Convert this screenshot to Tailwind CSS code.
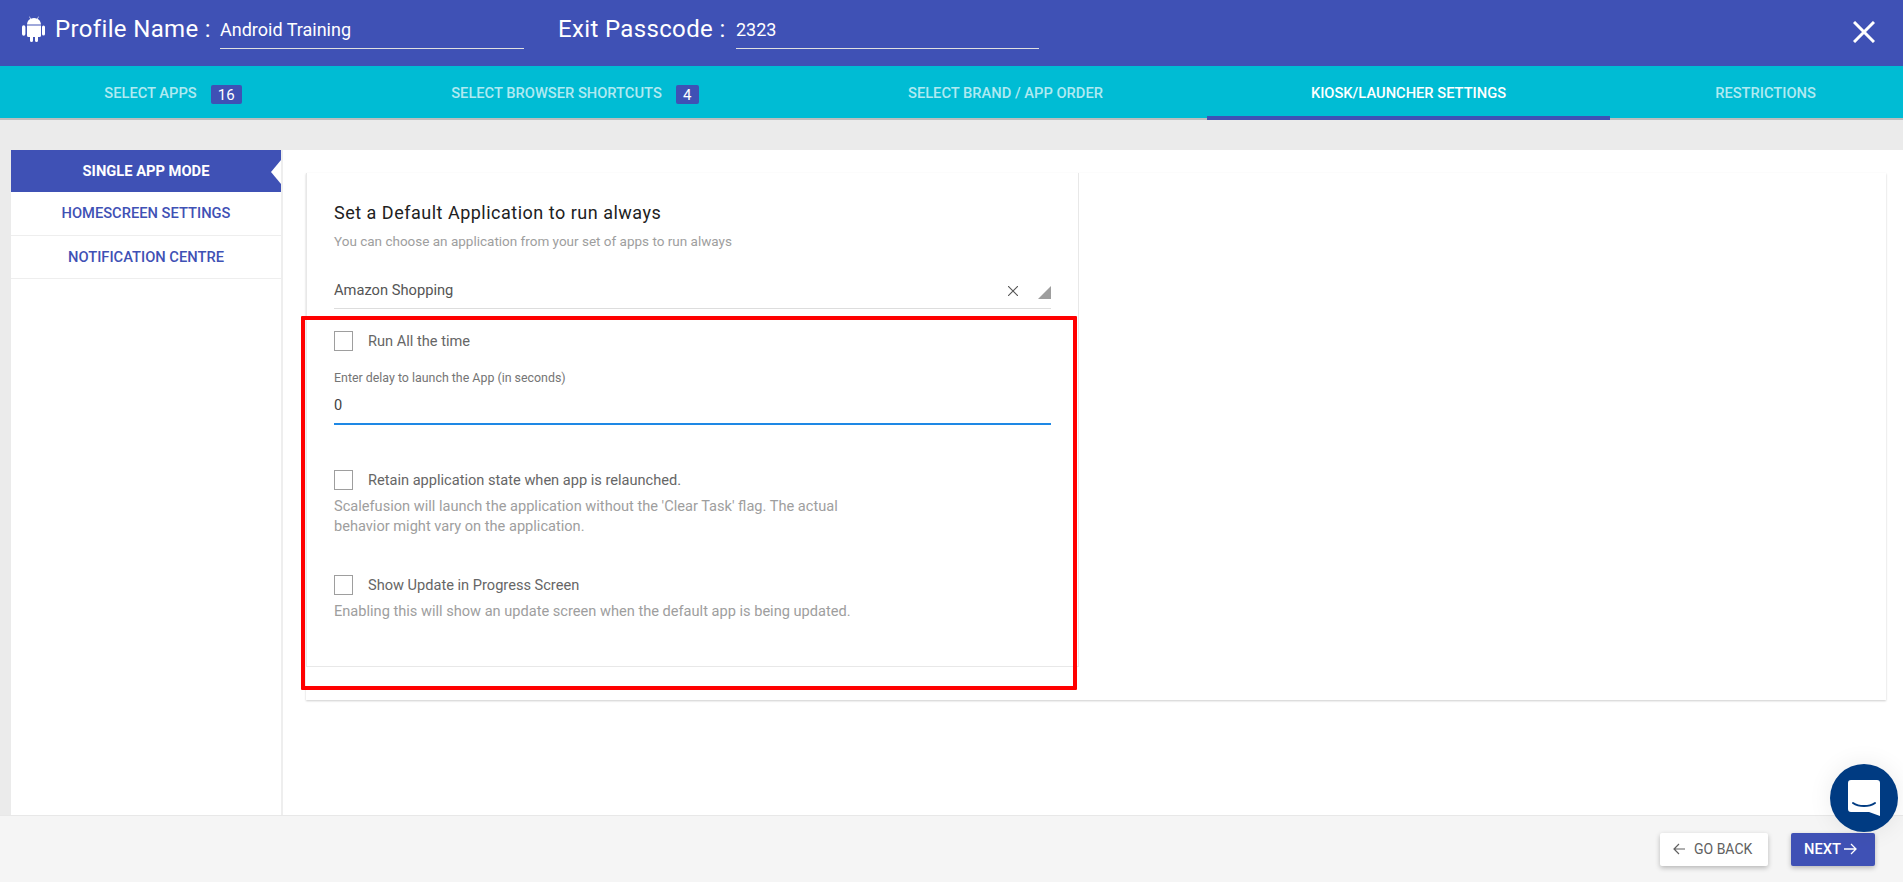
<!DOCTYPE html>
<html lang="en">
<head>
<meta charset="utf-8">
<title>Profile</title>
<script src="https://cdn.jsdelivr.net/npm/@tailwindcss/browser@4"></script>
</head>
<body class="w-[1903px] h-[882px] overflow-hidden relative bg-[#ebebeb] font-['Roboto',sans-serif]">
  <header class="h-[66px] bg-[#3f51b5] flex items-center text-white">
    <svg class="ml-[22px] w-[23px] h-[26px] mb-[9px]" viewBox="0 0 23 26" fill="#fff">
      <path d="M5 9.500h14v10a1.500 1.500 0 0 1-1.500 1.500H16v3.500a1.500 1.500 0 0 1-3 0V21h-2v3.500a1.500 1.500 0 0 1-3 0V21H6.500A1.500 1.500 0 0 1 5 19.500z"/>
      <path d="M0 11a1.700 1.700 0 0 1 3.400 0v7a1.700 1.700 0 0 1-3.400 0zM20 11a1.500 1.500 0 0 1 3 0v7a1.500 1.500 0 0 1-3 0z"/>
      <path d="M5 8.500C5.100 6 6.500 4 8.300 3.100L7.200.8l.5-.3L8.900 2.700c1-.4 2-.6 3.100-.6s2.100.2 3.100.6L16.300.5l.5.3-1.100 2.300C17.500 4 18.900 6 19 8.500z"/>
    </svg>
    <span class="ml-[10px] w-[154px] text-[24px] tracking-[0.35px] whitespace-nowrap mb-[8px]">Profile Name :</span>
    <div class="ml-[11px] w-[304px] h-[35px] mb-[4px] border-b border-[#e0e0e0] text-[18px] leading-[35px]"><span class="block -mt-[2px]">Android Training</span></div>
    <span class="ml-[34px] w-[166px] text-[24px] tracking-[0.35px] whitespace-nowrap mb-[8px]">Exit Passcode :</span>
    <div class="ml-[12px] w-[303px] h-[35px] mb-[4px] border-b border-[#e0e0e0] text-[18px] leading-[35px]"><span class="block -mt-[2px]">2323</span></div>
    <svg class="ml-auto mr-[28px] w-[22px] h-[22px] mt-[-2px]" viewBox="0 0 22 22" stroke="#fff" stroke-width="3" fill="none"><path d="M1 1l20 20M21 1L1 21"/></svg>
  </header>

  <nav class="h-[54px] bg-[#00bcd4] border-b-2 border-[#bdbdbd] flex text-[14.7px] font-medium text-white/70">
    <div class="w-[346px] h-[54px] flex items-center justify-center gap-[14px]"><span>SELECT APPS</span><span class="bg-[#3f51b5] text-white rounded-[2px] h-[19px] w-[31px] mt-[2px] leading-[20px] text-center text-[15px] font-normal">16</span></div>
    <div class="w-[458px] h-[54px] flex items-center justify-center gap-[14px]"><span>SELECT BROWSER SHORTCUTS</span><span class="bg-[#3f51b5] text-white rounded-[2px] h-[19px] w-[23px] mt-[2px] leading-[20px] text-center text-[15px] font-normal">4</span></div>
    <div class="w-[403px] h-[54px] flex items-center justify-center"><span>SELECT BRAND / APP ORDER</span></div>
    <div class="w-[403px] h-[54px] flex items-center justify-center pt-[4px] text-white border-b-4 border-[#3f51b5]"><span>KIOSK/LAUNCHER SETTINGS</span></div>
    <div class="w-[293px] pl-[18px] h-[54px] flex items-center justify-center"><span>RESTRICTIONS</span></div>
  </nav>

  <main class="mt-[30px] ml-[11px] h-[665px] bg-white flex">
    <aside class="w-[270px] h-full text-[14.7px] font-medium text-center text-[#3f51b5] border-r-2 border-[#eeeeee] box-content">
      <div class="relative h-[42px] leading-[42px] bg-[#3f51b5] text-white font-bold">SINGLE APP MODE
        <span class="absolute right-0 top-[10px] w-0 h-0 border-y-[12px] border-y-transparent border-r-[10px] border-r-white"></span>
      </div>
      <div class="h-[44px] leading-[42px] border-b border-[#eeeeee]">HOMESCREEN SETTINGS</div>
      <div class="h-[43px] leading-[42px] border-b border-[#eeeeee]">NOTIFICATION CENTRE</div>
    </aside>
    <section class="ml-[23px] mt-[23px] w-[1580px] h-[527px] bg-white shadow-[0_1px_2px_rgba(0,0,0,0.2)] flex flex-col">
      <div class="w-[773px] h-[494px] border-l border-r border-b border-[#e8e8e8] pl-[27px] pr-[27px]">
        <h2 class="mt-[26px] text-[18px] leading-[28px] text-[#212121] tracking-[0.5px]">Set a Default Application to run always</h2>
        <p class="mt-[4px] text-[13.5px] leading-[20px] text-[#9e9e9e]">You can choose an application from your set of apps to run always</p>
        <div class="mt-[17px] h-[41px] border-b border-[#dddddd] flex items-center text-[14.7px] text-[#555555] relative">
          <span class="mt-[4px]">Amazon Shopping</span>
          <svg class="absolute right-[33px] top-[18px] w-[10px] h-[10px]" viewBox="0 0 10 10" stroke="#555" stroke-width="1.100" fill="none"><path d="M0 0l10 10M10 0L0 10"/></svg>
          <span class="absolute right-0 top-[18px] w-0 h-0 border-b-[13px] border-b-[#9e9e9e] border-l-[13px] border-l-transparent"></span>
        </div>
        <label class="mt-[22px] flex items-center h-[20px] text-[14.6px] text-[#666666]"><span class="w-[19px] h-[20px] border border-[#9e9e9e] mr-[15px]"></span><span class="mt-[2px]">Run All the time</span></label>
        <p class="mt-[19px] text-[12.4px] leading-[16px] text-[#757575]">Enter delay to launch the App (in seconds)</p>
        <div class="mt-[8px] h-[31px] border-b-2 border-[#1e88e5] text-[14.6px] leading-[22px] text-[#424242]">0</div>
        <label class="mt-[45px] flex items-center h-[20px] text-[14.6px] text-[#666666]"><span class="w-[19px] h-[20px] border border-[#9e9e9e] mr-[15px]"></span><span class="mt-[2px]">Retain application state when app is relaunched.</span></label>
        <p class="mt-[6px] w-[540px] text-[14.6px] leading-[20px] text-[#9e9e9e]">Scalefusion will launch the application without the 'Clear Task' flag. The actual behavior might vary on the application.</p>
        <label class="mt-[39px] flex items-center h-[20px] text-[14.6px] text-[#666666]"><span class="w-[19px] h-[20px] border border-[#9e9e9e] mr-[15px]"></span><span class="mt-[2px]">Show Update in Progress Screen</span></label>
        <p class="mt-[6px] text-[14.6px] leading-[20px] text-[#9e9e9e]">Enabling this will show an update screen when the default app is being updated.</p>
      </div>
    </section>
  </main>

  <footer class="h-[67px] bg-[#f5f5f5] border-t border-[#e8e8e8] flex justify-end pt-[17px] pr-[28px] gap-[23px]">
    <button class="w-[108px] h-[33px] bg-white rounded-[2px] shadow-[0_2px_5px_rgba(0,0,0,0.25)] text-[14px] text-[#616161] flex items-center pl-[13px]">
      <svg class="w-[12px] h-[12px] mr-[9px] mb-[2px]" viewBox="0 0 12 12" stroke="#616161" stroke-width="1.200" fill="none"><path d="M12 6H1M6 1L1 6l5 5"/></svg>GO BACK
    </button>
    <button class="w-[84px] h-[33px] bg-[#3f51b5] rounded-[2px] shadow-[0_2px_5px_rgba(0,0,0,0.25)] text-[14.7px] font-medium text-white flex items-center pl-[13px]">
      NEXT<svg class="w-[13px] h-[12px] ml-[3px] mb-[2px]" viewBox="0 0 13 12" stroke="#fff" stroke-width="1.300" fill="none"><path d="M0 6h12M7 1l5 5-5 5"/></svg>
    </button>
  </footer>

  <div class="absolute left-[301px] top-[316px] w-[776px] h-[374px] border-[4px] border-[#ff0000] rounded-[1px]"></div>

  <div class="absolute left-[1830px] top-[764px] w-[68px] h-[68px] rounded-full bg-[#003b82] shadow-[0_0_24px_rgba(0,0,0,0.08)] flex items-center justify-center">
    <svg class="w-[32px] h-[36px]" viewBox="0 0 32 36"><path d="M3 0h26a3 3 0 0 1 3 3v33l-11-4H3a3 3 0 0 1-3-3V3a3 3 0 0 1 3-3z" fill="#fff"/><path d="M5 23c6 4 16 4 22 0" stroke="#003b82" stroke-width="2" fill="none" stroke-linecap="round"/></svg>
  </div>
</body>
</html>
